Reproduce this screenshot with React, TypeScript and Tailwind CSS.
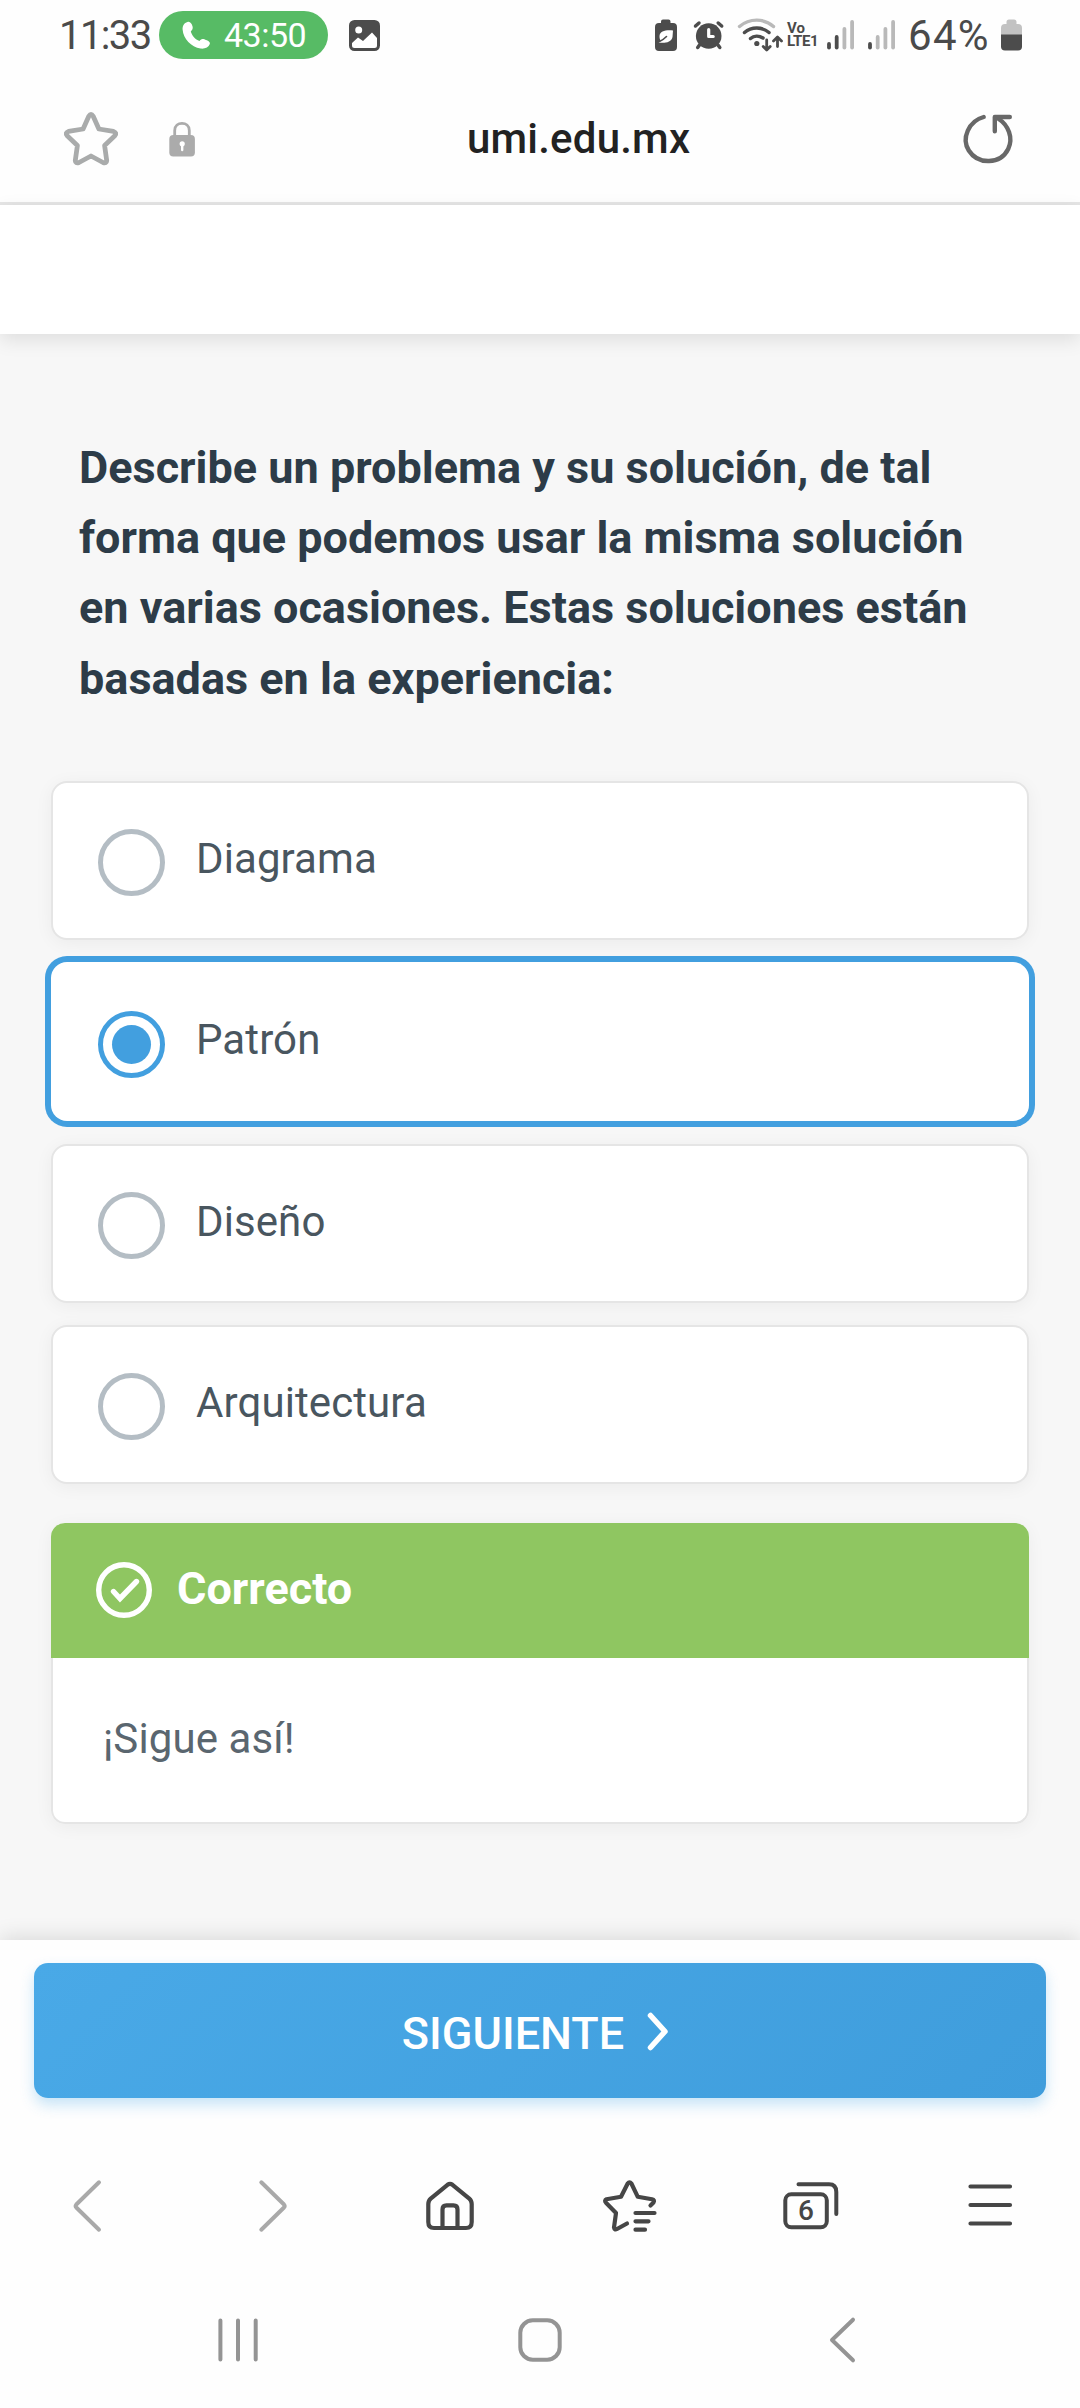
import React from "react";

const ROBOTO = "font-[Roboto,'Liberation_Sans',sans-serif]";

type IconProps = { box: string; className: string; children: React.ReactNode };

function Icon({ box, className, children }: IconProps) {
  return (
    <svg
      viewBox={box}
      className={`shrink-0 ${className}`}
      fill="none"
      strokeLinecap="round"
      strokeLinejoin="round"
    >
      {children}
    </svg>
  );
}

function SignalBars({ strong, className }: { strong: number; className: string }) {
  const tops = [44, 37, 29, 22];
  return (
    <Icon box="826 18 30 34" className={`w-[30px] h-[34px] ${className}`}>
      {tops.map((top, i) => (
        <path
          key={top}
          d={`M${829 + i * 7.7} ${top}V47.5`}
          stroke={i < strong ? "#4c4c4c" : "#b9b9b9"}
          strokeWidth="3.8"
        />
      ))}
    </Icon>
  );
}

function StatusBar() {
  return (
    <div className="flex h-[70px] items-start text-[#4a4a4a]">
      <span className="ml-[59px] w-[100px] pt-[12px] text-[40px] leading-[47px] tracking-[-1.6px] whitespace-nowrap">
        11:33
      </span>
      <div className="mt-[11px] flex h-[48px] w-[169px] shrink-0 items-center rounded-full bg-[#57bb65] pl-[22px]">
        <Icon box="181 19 30 31" className="h-[31px] w-[30px]">
          <path
            d="M187.5 21c2.800-.8 4.200 1.800 5 4.300.7 2.300-.2 3.800-1.700 5.200 1.200 4.300 4.400 7.900 8.700 9.500 1.700-2 3.300-2.400 5.400-1.500 2.700 1.100 5.700 2.300 4.900 4.600-1.200 3.400-5 5-9.300 4.500-9.300-1.300-17.200-9.700-17.900-19-.2-3.800 1.500-6.800 4.900-7.600z"
            fill="#fff"
          />
        </Icon>
        <span className="ml-[13px] text-[34px] leading-[40px] tracking-[-0.5px] text-white">
          43:50
        </span>
      </div>
      <Icon box="348 19 33 33" className="mt-[19px] ml-[20px] h-[33px] w-[33px]">
        <rect x="349" y="20" width="31" height="31" rx="5.500" fill="#4c4c4c" />
        <circle cx="358.700" cy="30" r="3.500" fill="#fff" />
        <path d="M352 43l6-5.500 5 3.500 9-8.500 5 5.500v7.500q0 2.500-2.500 2.500h-20q-2.500 0-2.500-2.500z" fill="#fff" />
      </Icon>
      <Icon box="654 18 24 34" className="mt-[18px] ml-[273px] h-[34px] w-[24px]">
        <path
          d="M661 21.500q0-2 2-2h5.500q2 0 2 2v1.500h2.500q4 0 4 4v20q0 4-4 4h-14q-4 0-4-4v-20q0-4 4-4h2z"
          fill="#4c4c4c"
        />
        <path d="M673 30.500c-7-.8-13 .5-13.500 5.500 0 2 .3 3.300 1 4.500l-1.800 2c5 .8 12.800.5 13.800-5.500z" fill="#fff" />
        <path d="M659.500 41.500c2.500-1 4.500-2.500 7-5" stroke="#4c4c4c" strokeWidth="1.600" />
      </Icon>
      <Icon box="693 19 32 33" className="mt-[19px] ml-[15px] h-[33px] w-[32px]">
        <circle cx="708.700" cy="36" r="12.800" fill="#4c4c4c" />
        <path d="M695.500 26l3.500-3M718.200 23l3.500 3M699.500 45l-1.800 2.500M718 45l1.800 2.500" stroke="#4c4c4c" strokeWidth="3.500" />
        <path d="M708.700 29.500v7h4.500" stroke="#fff" strokeWidth="3.200" />
      </Icon>
      <Icon box="736 16 48 37" className="mt-[16px] ml-[11px] h-[37px] w-[48px]">
        <path d="M739.500 26.500c10-8.500 24.500-8.500 34 0" stroke="#b9b9b9" strokeWidth="3.400" />
        <path d="M744.500 32.500c7-6 17.500-6 24.500 0" stroke="#4c4c4c" strokeWidth="3.500" />
        <path d="M750.500 38.500c3.500-3 8.500-3 12.500-.5" stroke="#4c4c4c" strokeWidth="3.500" />
        <circle cx="756.800" cy="43.500" r="2.600" fill="#4c4c4c" />
        <path d="M766.700 40v9.500M763.200 46.500l3.500 3.500 3.500-3.500M777.500 46.500V37.500M773.500 41l4-4 4 4" stroke="#4c4c4c" strokeWidth="2.800" />
      </Icon>
      <div className="mt-[22px] ml-[3px] w-[35px] text-[15px] leading-[13px] font-bold whitespace-nowrap">
        <div>Vo</div>
        <div className="tracking-[-0.4px]">LTE1</div>
      </div>
      <SignalBars strong={2} className="mt-[18px] ml-[4px]" />
      <SignalBars strong={1} className="mt-[18px] ml-[11px]" />
      <span className="ml-[11px] w-[92px] pt-[11px] text-[42px] leading-[49px] tracking-[1.300px] whitespace-nowrap">
        64%
      </span>
      <Icon box="999 18 23 34" className="mt-[18px] ml-0 h-[34px] w-[23px]">
        <path d="M1005.500 22q0-2.500 2.500-2.500h5q2.500 0 2.500 2.500v2h1.500q4 0 4 4v7h-21v-7q0-4 4-4h1.500z" fill="#c2c2c2" />
        <path d="M1000 34.500h21v12q0 4-4 4h-13q-4 0-4-4z" fill="#4c4c4c" />
      </Icon>
    </div>
  );
}

function AddressBar() {
  return (
    <div className="flex h-[135px] items-center border-b-[3px] border-[#e5e5e5] pt-[5px]">
      <Icon box="60 107 62 62" className="ml-[60px] h-[62px] w-[62px]">
        <path
          d="M88.800 115.200Q91 111.800 93.200 115.200L98.900 128L113.500 130.400Q117.300 131.800 114.800 134.800L104.600 144.500L106.700 159.500Q106.500 163 103 161.500L91 155L79 161.500Q75.500 163 75.300 159.500L77.400 144.500L67.200 134.800Q64.700 131.800 68.500 130.400L83.100 128Z"
          stroke="#a9abab"
          strokeWidth="4.800"
        />
      </Icon>
      <Icon box="168 119 28 38" className="ml-[46px] h-[38px] w-[28px]">
        <path d="M174.700 136v-6.500c0-9.500 14.600-9.500 14.600 0V136" stroke="#ababab" strokeWidth="2.800" />
        <rect x="169.300" y="134" width="25.600" height="21.500" rx="4" fill="#ababab" />
        <circle cx="182.200" cy="142.800" r="2.600" fill="#fff" />
        <path d="M182.200 143v6" stroke="#fff" strokeWidth="2.400" />
      </Icon>
      <span className="ml-[271px] w-[227px] pt-px text-[42px] leading-[48px] font-medium tracking-[0.2px] whitespace-nowrap text-[#222]">
        umi.edu.mx
      </span>
      <Icon box="960 108 60 60" className="ml-[265px] h-[60px] w-[60px]">
        <path d="M984.700 116C970 120 962 137 969.800 149.500C979 164 1001.500 163.500 1009.200 148C1014.500 137 1009.500 124 999 117.500" stroke="#686868" strokeWidth="4.400" />
        <path d="M1010.800 116H995.800V130.200" stroke="#686868" strokeWidth="4.400" />
      </Icon>
    </div>
  );
}

function Radio({ checked }: { checked: boolean }) {
  return (
    <span
      className={`mt-[5px] flex h-[67px] w-[67px] shrink-0 items-center justify-center rounded-full bg-white ${
        checked ? "border-[5px] border-[#429fdf]" : "border-[5.500px] border-[#b4bdc4]"
      }`}
    >
      {checked && <span className="h-[39px] w-[39px] rounded-full bg-[#429fdf]" />}
    </span>
  );
}

function Option({ label, checked = false }: { label: string; checked?: boolean }) {
  return (
    <div
      className={`flex h-[159px] items-center rounded-[16px] bg-white ${
        checked
          ? "pl-[47px] shadow-[0_0_0_6px_#429fdf]"
          : "border-2 border-[#e5e5e5] pl-[45px] shadow-[0_3px_18px_rgba(0,0,0,0.05)]"
      }`}
    >
      <Radio checked={checked} />
      <span className="ml-[31px] pb-[3px] text-[42px] leading-[50px] tracking-[0.1px] text-[#49565f]">
        {label}
      </span>
    </div>
  );
}

function Feedback() {
  return (
    <div className="mt-[39px] h-[301px] rounded-[14px] bg-white shadow-[0_3px_18px_rgba(0,0,0,0.05)]">
      <div className="flex h-[135px] items-center rounded-t-[14px] bg-[#8fc661] pl-[45px]">
        <Icon box="96 1562 56 56" className="h-[56px] w-[56px]">
          <circle cx="124" cy="1590" r="25.300" stroke="#fff" strokeWidth="5.400" />
          <path d="M113.500 1591.500L120 1598.500L136.500 1581.500" stroke="#fff" strokeWidth="5.400" strokeLinejoin="miter" />
        </Icon>
        <span className="ml-[25px] pb-[3px] text-[45px] leading-[52px] font-bold text-white">Correcto</span>
      </div>
      <div className="h-[166px] rounded-b-[14px] border-2 border-t-0 border-[#e5e5e5] pt-[56px] pl-[50px] text-[42px] leading-[50px] tracking-[0.1px] text-[#5a666f]">
        ¡Sigue así!
      </div>
    </div>
  );
}

function BrowserBar() {
  const cell = "h-[90px] w-[80px]";
  return (
    <div className="relative grid h-[110px] grid-cols-6 place-items-center bg-[#fefefe] text-[#464646]">
      <Icon box="50 2161 80 90" className={cell}>
        <path d="M99 2182.300L76.300 2204.500Q75 2206 76.300 2207.500L99 2229.700" stroke="#a9a9a9" strokeWidth="4" />
      </Icon>
      <Icon box="230 2161 80 90" className={cell}>
        <path d="M261.300 2182.300L284 2204.500Q285.300 2206 284 2207.500L261.300 2229.700" stroke="#a9a9a9" strokeWidth="4" />
      </Icon>
      <Icon box="410 2161 80 90" className={cell}>
        <g stroke="#464646" strokeWidth="4.200">
          <path d="M447.500 2184.800Q450 2183 452.500 2184.800L469 2198.300Q471.700 2200.800 471.700 2204V2222Q471.700 2228 466 2228H434Q428.300 2228 428.300 2222V2204Q428.300 2200.800 431 2198.300Z" />
          <path d="M442.500 2227V2209.500Q442.500 2205.300 446.500 2205.300H453.500Q457.500 2205.300 457.500 2209.500V2227" />
        </g>
      </Icon>
      <Icon box="590 2161 80 90" className={cell}>
        <g stroke="#464646" strokeWidth="4.200">
          <path d="M650.500 2205.500L653.500 2202.500Q655 2200 652 2199.300L637.800 2196.800L631.400 2183.500Q629.500 2181 627.700 2183.500L621 2196.800L606.500 2199.300Q604 2200.300 606 2202.800L616 2213L614 2227.500Q614.500 2230.500 617 2229L627 2223.500" />
          <path d="M635.500 2213H654.500M635.500 2221.300H648.500M635.500 2229.700H645" />
        </g>
      </Icon>
      <div className="relative flex h-[90px] w-[80px]">
        <Icon box="770 2161 80 90" className={cell}>
          <g stroke="#464646" strokeWidth="4">
            <rect x="785.300" y="2194.300" width="41.500" height="33" rx="6" />
            <path d="M798.500 2184.300H829Q836.300 2184.300 836.300 2192V2214" />
          </g>
        </Icon>
        <span className="absolute top-[34px] left-[16px] w-[40px] text-center text-[28px] leading-[32px] font-medium">
          6
        </span>
      </div>
      <Icon box="950 2161 80 90" className={cell}>
        <path d="M970.500 2186.500H1010M970.500 2205H1010M970.500 2223.500H1010" stroke="#464646" strokeWidth="4.200" />
      </Icon>
    </div>
  );
}

function SystemNav() {
  return (
    <div className="grid h-[80px] grid-cols-3 place-items-center px-[87px]">
      <Icon box="208 2310 60 60" className="h-[60px] w-[60px]">
        <path d="M220.400 2320.500V2359.500M238 2320.500V2359.500M255.700 2320.500V2359.500" stroke="#949494" strokeWidth="4" />
      </Icon>
      <Icon box="510 2310 60 60" className="h-[60px] w-[60px]">
        <rect x="520.300" y="2320.300" width="39.400" height="39.400" rx="12.500" stroke="#949494" strokeWidth="4" />
      </Icon>
      <Icon box="812 2310 60 60" className="h-[60px] w-[60px]">
        <path d="M853 2319.700L832 2340L853 2360.300" stroke="#949494" strokeWidth="4" />
      </Icon>
    </div>
  );
}

export default function App() {
  return (
    <div className={`flex h-[2408px] w-[1080px] flex-col overflow-hidden bg-[#fefefe] ${ROBOTO}`}>
      <StatusBar />
      <AddressBar />
      <div className="relative h-[129px] shrink-0 bg-white shadow-[0_6px_18px_rgba(0,0,0,0.1)]" />
      <main className="h-[1606px] shrink-0 bg-[#f7f7f7] px-[51px] pt-[99px]">
        <h1 className="pl-[28px] text-[45px] leading-[70.200px] font-bold whitespace-nowrap text-[#2d3c48]">
          Describe un problema y su solución, de tal
          <br />
          forma que podemos usar la misma solución
          <br />
          en varias ocasiones. Estas soluciones están
          <br />
          basadas en la experiencia:
        </h1>
        <div className="mt-[67px] flex flex-col gap-[22.400px]">
          <Option label="Diagrama" />
          <Option label="Patrón" checked />
          <Option label="Diseño" />
          <Option label="Arquitectura" />
        </div>
        <Feedback />
      </main>
      <div className="relative h-[211px] shrink-0 bg-[#fefefe] px-[34px] pt-[23px] shadow-[0_-3px_20px_rgba(0,0,0,0.12)]">
        <button className="flex h-[135px] w-full items-center rounded-[14px] bg-linear-[135deg,#49a9e7,#3f9ddc] pl-[366px] text-white shadow-[0_7px_14px_rgba(73,169,231,0.3)]">
          <span className="w-[226px] pt-[6px] text-[45px] leading-[52px] font-medium whitespace-nowrap">SIGUIENTE</span>
          <Icon box="644 2008 28 44" className="ml-[18px] h-[44px] w-[28px]">
            <path d="M650.500 2014.500L665 2030.500L650.500 2046.500" stroke="#fff" strokeWidth="5.500" />
          </Icon>
        </button>
      </div>
      <BrowserBar />
      <div className="h-[39px]" />
      <SystemNav />
    </div>
  );
}
